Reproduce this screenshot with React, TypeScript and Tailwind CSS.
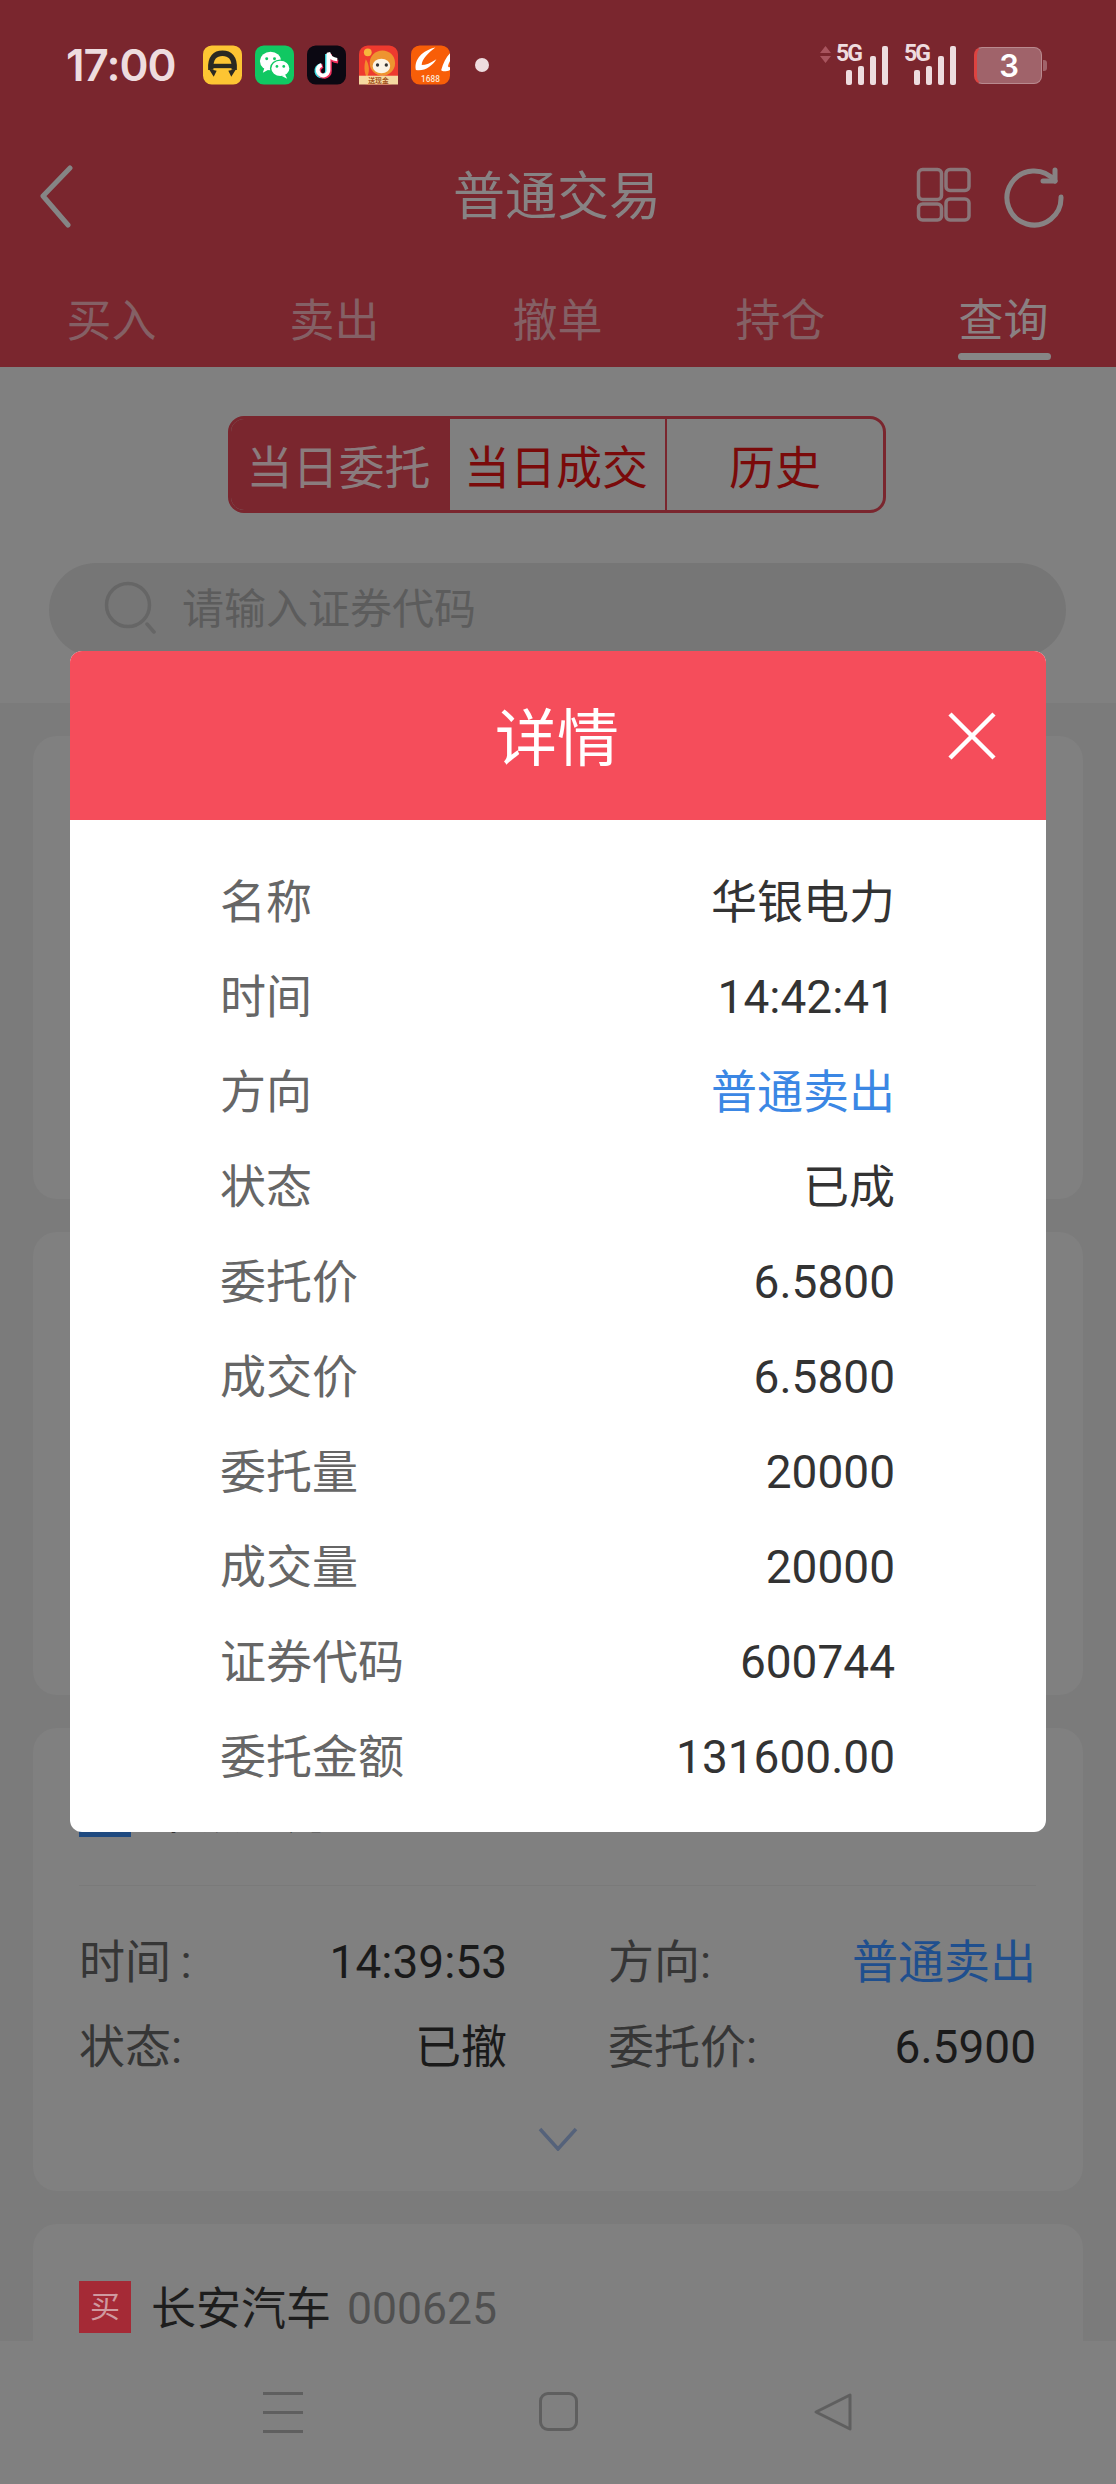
import React from "react";

const FONT = "[font-family:Roboto,'Noto_Sans_CJK_SC',sans-serif]";

function AppIcons() {
  return (
    <div className="flex items-center gap-[13px]">
      <svg width="39" height="40" viewBox="0 0 40 40">
        <rect width="40" height="40" rx="9" fill="#fdc533" />
        <path d="M8 25 C7 12 13 8 20 8 C27 8 33 12 32 25" fill="none" stroke="#2b2a22" strokeWidth="5.5" />
        <path d="M9 21 H31" stroke="#2b2a22" strokeWidth="4.5" />
        <path d="M6 24 L14 26 L11 32 Z M34 24 L26 26 L29 32 Z" fill="#2b2a22" />
      </svg>
      <svg width="39" height="40" viewBox="0 0 40 40">
        <rect width="40" height="40" rx="9" fill="#10c862" />
        <ellipse cx="16" cy="16" rx="11" ry="9.5" fill="#fff" />
        <path d="M10 22 L8 28 L15 24 Z" fill="#fff" />
        <ellipse cx="26" cy="23.5" rx="10" ry="8.5" fill="#fff" stroke="#10c862" strokeWidth="1.5" />
        <path d="M31 30 L33 34 L27 31 Z" fill="#fff" />
        <circle cx="12" cy="13.5" r="1.5" fill="#10c862" />
        <circle cx="20" cy="13.5" r="1.5" fill="#10c862" />
        <circle cx="22.5" cy="21.5" r="1.4" fill="#10c862" />
        <circle cx="29.5" cy="21.5" r="1.4" fill="#10c862" />
      </svg>
      <svg width="39" height="40" viewBox="0 0 40 40">
        <rect width="40" height="40" rx="9" fill="#0b0812" />
        <path d="M22 8 V25 A5.5 5.5 0 1 1 15 20" fill="none" stroke="#3fe0e6" strokeWidth="4.5" transform="translate(-1.2 0.6)" />
        <path d="M22 8 V25 A5.5 5.5 0 1 1 15 20" fill="none" stroke="#f0305c" strokeWidth="4.5" transform="translate(1.2 1)" />
        <path d="M22 8 C23 13 26 15 31 15.5" fill="none" stroke="#f0305c" strokeWidth="4" transform="translate(1 1)" />
        <path d="M22 8 V25 A5.5 5.5 0 1 1 15 20" fill="none" stroke="#fff" strokeWidth="4" />
        <path d="M22 7 C23 12 26 14 31 14.5" fill="none" stroke="#fff" strokeWidth="3.5" />
      </svg>
      <svg width="39" height="40" viewBox="0 0 40 40">
        <rect width="40" height="40" rx="9" fill="#ee3a2f" />
        <circle cx="9" cy="7" r="4" fill="#f7b53c" />
        <path d="M7 14 C11 20 11 27 8 33 C5 27 5 20 7 14 Z" fill="#f58a2c" />
        <circle cx="24" cy="18" r="13" fill="#ee9430" />
        <ellipse cx="23" cy="21" rx="9" ry="7.5" fill="#fbf3e4" />
        <circle cx="19" cy="20" r="1.7" fill="#333" />
        <circle cx="28" cy="20" r="1.7" fill="#333" />
        <rect x="0" y="31" width="40" height="9" fill="#f6d9a0" />
        <text x="20" y="38.5" textAnchor="middle" fontSize="7" fontWeight="700" fill="#a3531d" fontFamily="Noto Sans CJK SC">送现金</text>
      </svg>
      <svg width="39" height="40" viewBox="0 0 40 40">
        <rect width="40" height="40" rx="9" fill="#f85e08" />
        <path d="M5 25 C3 14 12 5 25 2 C18 7 11 14 11 20 C15 20 20 18 26 14 C22 21 13 27 5 25 Z" fill="#fff" />
        <path d="M31 25 C33 18 36 12 40 8 V16 C38 20 37 23 40 22 V25 C36 27 32 27 31 25 Z" fill="#fff" />
        <text x="20" y="37" textAnchor="middle" fontSize="8.5" fontWeight="500" fill="#fde8d8" fontFamily="Roboto">1688</text>
      </svg>
    </div>
  );
}

function Signal() {
  return (
    <div className="relative w-[52px] h-[40px]">
      <span className="absolute left-0 top-[-3px] text-[23px] leading-[24px] font-bold tracking-[-2px] text-[#eedcdf] font-['Roboto']">5G</span>
      <div className="flex items-end gap-[6px] pl-[10px] h-full">
        {[15, 19, 29, 39].map((h) => (
          <div key={h} className="w-[6px] rounded-[2px] bg-[#eedcdf]" style={{ height: h }} />
        ))}
      </div>
    </div>
  );
}

function StatusBar() {
  return (
    <div className="h-[130px] flex items-center justify-between pl-[66px] pr-[74px]">
      <div className="flex items-center">
        <span className="w-[137px] text-[44px] leading-none font-semibold text-[#eedcdf] font-['Inter'] tracking-[-1px]">17:00</span>
        <AppIcons />
        <div className="ml-[25px] w-[14px] h-[14px] rounded-full bg-[#eedcdf]" />
      </div>
      <div className="flex items-center">
        <svg width="11" height="17" viewBox="0 0 11 17" className="mr-[5px] mb-[22px]">
          <path d="M5.5 0 L11 7 H0 Z M0 10 H11 L5.5 17 Z" fill="#a8545e" />
        </svg>
        <Signal />
        <div className="w-[16px]" />
        <Signal />
        <div className="w-[18px]" />
        <div className="relative w-[68px] h-[37px] rounded-[8px] bg-[#a0636a] border border-[#b98a8f] border-l-[3px] border-l-[#dd4340] flex items-center justify-center">
          <span className="text-[31px] leading-none font-semibold text-white font-['Inter']">3</span>
          <div className="absolute right-[-6px] top-[12px] w-[4px] h-[11px] rounded-r-[3px] bg-[#a0636a]" />
        </div>
      </div>
    </div>
  );
}

function NavBar() {
  return (
    <div className="relative h-[134px] flex items-center justify-between pl-[38px] pr-[53px]">
      <svg width="36" height="64" viewBox="0 0 36 64" className="-mt-[1px]">
        <path d="M32 3 L5 31 L30 60" fill="none" stroke="#858585" strokeWidth="5" strokeLinecap="round" strokeLinejoin="round" />
      </svg>
      <span className="absolute left-0 right-0 pr-[2px] pt-[1px] text-center text-[52px] leading-none text-[#878384]">普通交易</span>
      <div className="flex items-center gap-[31px]">
        <svg width="56" height="56" viewBox="0 0 56 56" className="-mt-[6px]">
          <g fill="none" stroke="#8a7679" strokeWidth="3.5">
            <rect x="3.5" y="3.5" width="23" height="30" rx="4" />
            <rect x="31" y="3.5" width="23" height="21" rx="4" />
            <rect x="3.5" y="38" width="23" height="16" rx="4" />
            <rect x="31" y="33" width="23" height="21" rx="4" />
          </g>
        </svg>
        <svg width="64" height="64" viewBox="0 0 64 64" className="-mr-[3px]">
          <path d="M59 32 A27 27 0 1 1 53 16" fill="none" stroke="#878283" strokeWidth="5" strokeLinecap="round" />
          <path d="M53 5 V16 H41" fill="none" stroke="#878283" strokeWidth="5" strokeLinecap="round" strokeLinejoin="round" />
        </svg>
      </div>
    </div>
  );
}

function Tabs() {
  return (
    <div className="h-[103px] flex">
      {["买入", "卖出", "撤单", "持仓", "查询"].map((t, i) => (
        <div key={t} className="relative w-[223px] flex justify-center pt-[32px]">
          <span className={`text-[45px] leading-[52px] ${i === 4 ? "text-[#8a8082]" : "text-[#846065]"}`}>{t}</span>
          {i === 4 && <div className="absolute left-[66px] top-[89px] w-[93px] h-[7px] rounded-full bg-[#868686]" />}
        </div>
      ))}
    </div>
  );
}

function Toggle() {
  return (
    <div className="flex justify-center pr-[2px]">
      <div className="flex w-[658px] h-[97px] rounded-[16px] border-[3px] border-[#7a262e] overflow-hidden">
        <div className="w-[219px] pt-[7px] pr-[4px] bg-[#7a262e] flex items-center justify-center text-[46px] leading-none text-[#8a7c7e] whitespace-nowrap">当日委托</div>
        <div className="w-[217px] pt-[7px] pr-[3px] border-r-[2px] border-[#7a262e] flex items-center justify-center text-[46px] leading-none text-[#7a0a0a] whitespace-nowrap">当日成交</div>
        <div className="flex-1 pt-[7px] flex items-center justify-center text-[46px] leading-none text-[#7a0a0a]">历史</div>
      </div>
    </div>
  );
}

function Search() {
  return (
    <div className="ml-[49px] mr-[50px] h-[94px] mt-[50px] rounded-full bg-[#767676] flex items-center pl-[55px]">
      <svg width="52" height="54" viewBox="0 0 52 54" className="-mt-[4px]">
        <circle cx="24" cy="24" r="21.5" fill="none" stroke="#666666" strokeWidth="3.5" />
        <path d="M43 43 L50 51" stroke="#666666" strokeWidth="3.5" strokeLinecap="round" />
      </svg>
      <span className="ml-[26px] text-[42px] leading-none text-[#5c5c5c]">请输入证券代码</span>
    </div>
  );
}

function CardHead({ kind, tag, name, code }: { kind: "buy" | "sell"; tag: string; name: string; code: string }) {
  return (
    <div className="flex items-center h-[52px]">
      <div className={`w-[52px] h-[52px] flex items-center justify-center text-[30px] leading-none ${kind === "buy" ? "bg-[#a52a36] text-[#cf9aa0]" : "bg-[#1f4a80] text-[#9db4d0]"}`}>{tag}</div>
      <span className="ml-[20px] pt-[4px] text-[45px] leading-none text-[#1d1d1d]">{name}</span>
      <span className="ml-[16px] pt-[4px] text-[44.5px] leading-none text-[#505050]">{code}</span>
    </div>
  );
}

function Pair({ label, value, blue }: { label: string; value: string; blue?: boolean }) {
  return (
    <div className="flex items-center justify-between h-[85px]">
      <span className="text-[46px] leading-none text-[#363636]">{label}</span>
      <span className={`text-[46px] leading-none ${blue ? "text-[#1f4f8e]" : "text-[#1a1a1a]"}`}>{value}</span>
    </div>
  );
}

function Card({ children }: { children?: React.ReactNode }) {
  return <div className="h-[463px] shrink-0 rounded-[24px] bg-[#808080] pt-[57px] pl-[46px] pr-[47px]">{children}</div>;
}

function List() {
  return (
    <div className="flex-1 min-h-0 overflow-hidden bg-[#7b7b7b] flex flex-col gap-[33px] pt-[33px] px-[33px]">
      <Card />
      <Card />
      <Card>
        <CardHead kind="sell" tag="卖" name="华银电力" code="600744" />
        <div className="mt-[48px] h-[1px] bg-[#7a7a7a]" />
        <div className="mt-[33px] grid grid-cols-[428px_428px] justify-between">
          <Pair label="时间&#8201;:" value="14:39:53" />
          <Pair label="方向:" value="普通卖出" blue />
          <Pair label="状态:" value="已撤" />
          <Pair label="委托价:" value="6.5900" />
        </div>
        <div className="flex justify-center mt-[38px]">
          <svg width="40" height="24" viewBox="0 0 40 24">
            <path d="M2 2 L20 22 L38 2" fill="none" stroke="#55627a" strokeWidth="3.5" />
          </svg>
        </div>
      </Card>
      <Card>
        <CardHead kind="buy" tag="买" name="长安汽车" code="000625" />
      </Card>
    </div>
  );
}

function BottomNav() {
  return (
    <div className="h-[143px] shrink-0 bg-[#808080] flex justify-center items-start pt-[51px]">
      <div className="flex items-start">
        <div className="w-[40px] h-[41px] flex flex-col justify-between">
          <div className="h-[3px] bg-[#5f5f5f]" />
          <div className="h-[3px] bg-[#5f5f5f]" />
          <div className="h-[3px] bg-[#5f5f5f]" />
        </div>
        <div className="ml-[236px] w-[39px] h-[39px] rounded-[9px] border-[3px] border-[#5f5f5f]" />
        <svg width="40" height="40" viewBox="0 0 40 40" className="ml-[235px]">
          <path d="M37 3 V37 L3 20 Z" fill="none" stroke="#5f5f5f" strokeWidth="3" strokeLinejoin="round" />
        </svg>
      </div>
    </div>
  );
}

const DETAILS: [string, string, boolean?][] = [
  ["名称", "华银电力"],
  ["时间", "14:42:41"],
  ["方向", "普通卖出", true],
  ["状态", "已成"],
  ["委托价", "6.5800"],
  ["成交价", "6.5800"],
  ["委托量", "20000"],
  ["成交量", "20000"],
  ["证券代码", "600744"],
  ["委托金额", "131600.00"],
];

function Modal() {
  return (
    <div className="absolute left-[70px] top-[651px] w-[976px] h-[1181px] rounded-[12px] bg-white overflow-hidden">
      <div className="relative h-[169px] bg-[#f54d5b] flex items-center justify-center">
        <span className="pt-[8px] pr-[2px] text-[62px] leading-none text-white">详情</span>
        <svg width="48" height="48" viewBox="0 0 48 48" className="absolute right-[50px] top-[61px]">
          <path d="M2 2 L46 46 M46 2 L2 46" stroke="#fff" strokeWidth="4.5" />
        </svg>
      </div>
      <div className="pt-[34px] pl-[150px] pr-[151px]">
        {DETAILS.map(([k, v, blue]) => (
          <div key={k} className="h-[95px] flex items-center justify-between">
            <span className="text-[46px] leading-none text-[#666666]">{k}</span>
            <span className={`text-[46px] leading-none ${blue ? "text-[#3b87e4]" : "text-[#333333]"}`}>{v}</span>
          </div>
        ))}
      </div>
    </div>
  );
}

export default function App() {
  return (
    <div className={`relative w-[1116px] h-[2484px] overflow-hidden flex flex-col ${FONT}`}>
      <div className="h-[367px] shrink-0 bg-[#7a262e]">
        <StatusBar />
        <NavBar />
        <Tabs />
      </div>
      <div className="h-[336px] shrink-0 bg-[#808080] pt-[49px]">
        <Toggle />
        <Search />
      </div>
      <List />
      <BottomNav />
      <Modal />
    </div>
  );
}
